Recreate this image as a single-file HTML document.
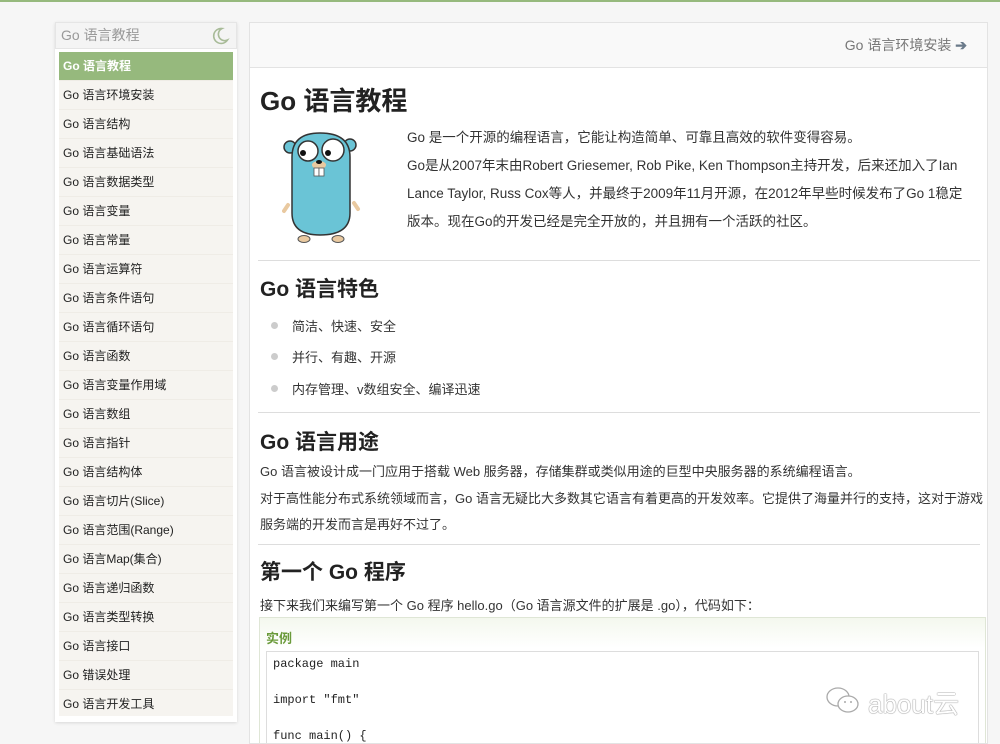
<!DOCTYPE html>
<html><head><meta charset="utf-8"><style>
*{margin:0;padding:0;box-sizing:border-box}
html,body{width:1000px;height:744px;overflow:hidden}
body{background:#f6f6f6;font-family:"Liberation Sans","Noto Sans CJK SC",sans-serif;color:#333;position:relative}
.a{position:absolute}
#top{left:0;top:0;width:1000px;height:2px;background:#96b97d}
#side{left:55px;top:22px;width:182px;height:700px;background:#fff;box-shadow:0 1px 3px rgba(0,0,0,.12)}
#sh{left:0;top:0;width:182px;height:27px;background:#f4f4f4;border:1px solid #e5e5e5;color:#999;font-size:14px;line-height:25px;padding-left:5px}
#list{left:4px;top:30px;width:174px;height:664px;background:#f6f4f0}
.it{height:29px;line-height:29px;font-size:12px;color:#222;padding-left:4px;border-bottom:1px solid #efece6}
.it.on{background:#96b97d;color:#fff;font-weight:bold}
#main{left:249px;top:22px;width:739px;height:722px;background:#fff;border:1px solid #e3e3e3;overflow:hidden}
#hd{left:0;top:0;width:737px;height:45px;background:#f9f9f9;border-bottom:1px solid #e3e3e3;text-align:right;padding-right:20px;line-height:44px;font-size:14px;color:#777}
h1{position:absolute;left:10px;top:58px;font-size:26px;color:#222}
h2{position:absolute;left:10px;font-size:21px;color:#222}
.p{position:absolute;font-size:13.5px;color:#333}
.hr{position:absolute;left:8px;width:722px;height:1px;background:#ddd}
.li{position:absolute;left:22px;font-size:13px;color:#333}
.li:before{content:"";position:absolute;left:-1px;top:6px;width:7px;height:7px;border-radius:50%;background:#ccc}
.li span{margin-left:20px}
</style></head><body>
<div id="top" class="a"></div>
<div id="side" class="a">
<div id="sh" class="a">Go 语言教程
<svg class="a" style="left:154px;top:3px" width="20" height="20" viewBox="0 0 20 20"><path d="M12 2.5A7.5 7.5 0 1 0 17.5 14 6 6 0 0 1 12 2.5z" fill="none" stroke="#a8bb98" stroke-width="1.6"/></svg></div>
<div id="list" class="a">
<div class="it on">Go 语言教程</div><div class="it">Go 语言环境安装</div><div class="it">Go 语言结构</div><div class="it">Go 语言基础语法</div><div class="it">Go 语言数据类型</div><div class="it">Go 语言变量</div><div class="it">Go 语言常量</div><div class="it">Go 语言运算符</div><div class="it">Go 语言条件语句</div><div class="it">Go 语言循环语句</div><div class="it">Go 语言函数</div><div class="it">Go 语言变量作用域</div><div class="it">Go 语言数组</div><div class="it">Go 语言指针</div><div class="it">Go 语言结构体</div><div class="it">Go 语言切片(Slice)</div><div class="it">Go 语言范围(Range)</div><div class="it">Go 语言Map(集合)</div><div class="it">Go 语言递归函数</div><div class="it">Go 语言类型转换</div><div class="it">Go 语言接口</div><div class="it">Go 错误处理</div><div class="it" style="border:0">Go 语言开发工具</div>
</div></div>
<div id="main" class="a">
<div id="hd" class="a">Go 语言环境安装 <span style="color:#6a7a8a;font-weight:bold">➔</span></div>
<h1>Go 语言教程</h1>
<svg class="a" style="left:32px;top:104px" width="80" height="116" viewBox="0 0 80 116">
<ellipse cx="8" cy="20" rx="6" ry="6" fill="#6ac4d6" stroke="#333" stroke-width="1.5"/>
<ellipse cx="68" cy="18" rx="6" ry="6" fill="#6ac4d6" stroke="#333" stroke-width="1.5"/>
<path d="M6 78 L2 84 M72 76 L76 82" stroke="#e9c9a0" stroke-width="4" stroke-linecap="round"/>
<path d="M10 30 Q10 6 38 6 Q68 6 68 30 L68 86 Q68 108 38 108 Q10 108 10 86 Z" fill="#6ac4d6" stroke="#333" stroke-width="1.5"/>
<ellipse cx="22" cy="112" rx="6" ry="3.5" fill="#e9c9a0" stroke="#555"/>
<ellipse cx="56" cy="112" rx="6" ry="3.5" fill="#e9c9a0" stroke="#555"/>
<circle cx="26" cy="24" r="10" fill="#fff" stroke="#333" stroke-width="1.5"/>
<circle cx="51" cy="23" r="11" fill="#fff" stroke="#333" stroke-width="1.5"/>
<circle cx="21" cy="26" r="3" fill="#111"/><circle cx="46" cy="26" r="3" fill="#111"/>
<ellipse cx="37" cy="38" rx="7" ry="4" fill="#e9c9a0"/>
<ellipse cx="37" cy="35" rx="3" ry="2" fill="#111"/>
<rect x="32" y="41" width="5" height="8" fill="#fff" stroke="#555" stroke-width=".8"/><rect x="37" y="41" width="5" height="8" fill="#fff" stroke="#555" stroke-width=".8"/>
</svg>
<div class="p" style="left:157px;top:101px;line-height:28px;width:568px">Go 是一个开源的编程语言，它能让构造简单、可靠且高效的软件变得容易。<br>Go是从2007年末由Robert Griesemer, Rob Pike, Ken Thompson主持开发，后来还加入了Ian Lance Taylor, Russ Cox等人，并最终于2009年11月开源，在2012年早些时候发布了Go 1稳定版本。现在Go的开发已经是完全开放的，并且拥有一个活跃的社区。</div>
<div class="hr" style="top:237px"></div>
<h2 style="top:250px">Go 语言特色</h2>
<div class="li" style="top:293px"><span>简洁、快速、安全</span></div>
<div class="li" style="top:324px"><span>并行、有趣、开源</span></div>
<div class="li" style="top:356px"><span>内存管理、v数组安全、编译迅速</span></div>
<div class="hr" style="top:389px"></div>
<h2 style="top:403px">Go 语言用途</h2>
<div class="p" style="left:10px;top:436px;line-height:26.5px;width:725px;font-size:13px">Go 语言被设计成一门应用于搭载 Web 服务器，存储集群或类似用途的巨型中央服务器的系统编程语言。<br>对于高性能分布式系统领域而言，Go 语言无疑比大多数其它语言有着更高的开发效率。它提供了海量并行的支持，这对于游戏服务端的开发而言是再好不过了。</div>
<div class="hr" style="top:521px"></div>
<h2 style="top:533px">第一个 Go 程序</h2>
<div class="p" style="left:10px;top:572px;font-size:13px">接下来我们来编写第一个 Go 程序 hello.go（Go 语言源文件的扩展是 .go），代码如下：</div>
<div class="a" style="left:9px;top:594px;width:727px;height:140px;border:1px solid #dfe6d6;background:linear-gradient(#f4f8ee,#fff 30px)">
<div class="a" style="left:6px;top:10px;font-size:13px;font-weight:bold;color:#6a9a3a">实例</div>
<div class="a" style="left:6px;top:33px;width:713px;height:110px;background:#fff;border:1px solid #ddd;font-family:'Liberation Mono',monospace;font-size:12px;color:#222;line-height:36px;padding-left:6px"><div style="margin-top:-6px">package main<br>import "fmt"<br>func main() {</div></div>
</div>
</div>
<svg class="a" style="left:824px;top:686px" width="40" height="30" viewBox="0 0 40 30"><g fill="none" stroke="#aaa" stroke-width="1.3"><ellipse cx="14" cy="11" rx="11" ry="9"/><ellipse cx="24" cy="18" rx="10" ry="8" fill="#fff"/></g><circle cx="21" cy="16" r="1" fill="#aaa"/><circle cx="27" cy="16" r="1" fill="#aaa"/></svg>
<div class="a" style="left:868px;top:684px;font-size:26px;color:#fff;text-shadow:0 0 1px #777,0 0 1px #777">about云</div>
</body></html>
